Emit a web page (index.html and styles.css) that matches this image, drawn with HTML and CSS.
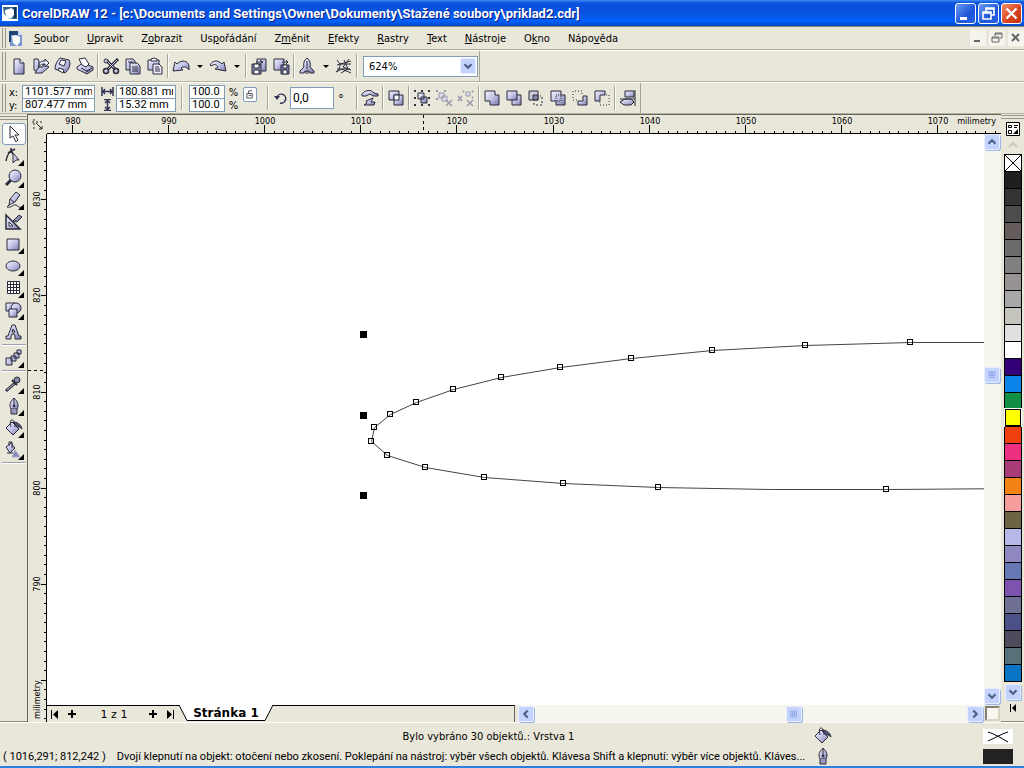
FILE: index.html
```html
<!DOCTYPE html>
<html lang="cs">
<head>
    <meta charset="UTF-8">
    <meta name="viewport" content="width=device-width, initial-scale=1.0">
    <title>CorelDRAW 12</title>
    <link rel="stylesheet" href="styles.css">
</head>
<body>
    <svg class="defs" aria-hidden="true">
        <defs>
            <linearGradient id="lav" x1="0" y1="0" x2="1" y2="1">
                <stop offset="0" stop-color="#f4f4ff"/>
                <stop offset="0.5" stop-color="#c4c4e8"/>
                <stop offset="1" stop-color="#7878aa"/>
            </linearGradient>
            <symbol id="bucket" viewBox="0 0 18 18">
                <path d="M1 9l6-6 7 7-6 6z" fill="url(#lav)"/>
                <path d="M6 8C5 4 5 1 7 1s3 3 3 7" fill="none"/>
                <path d="M8 3c4 0 8 2 9 7-2-2-3-2-5-2z" fill="#555577"/>
            </symbol>
            <symbol id="nib" viewBox="0 0 18 18">
                <path d="M9 1C5 5 4 8 6 12h6c2-4 1-7-3-11z" fill="url(#lav)"/>
                <path d="M9 1v8M6 12v5h6v-5" fill="#9999bb"/>
                <circle cx="9" cy="9" r="1" fill="#333"/>
            </symbol>
            <symbol id="down" viewBox="0 0 16 16"><path d="M4 6l4 4 4-4" fill="none" stroke="#4d6185" stroke-width="2.5"/></symbol>
            <symbol id="up" viewBox="0 0 16 16"><path d="M4 10l4-4 4 4" fill="none" stroke="#4d6185" stroke-width="2.5"/></symbol>
            <symbol id="left" viewBox="0 0 16 16"><path d="M10 4L6 8l4 4" fill="none" stroke="#4d6185" stroke-width="2.5"/></symbol>
            <symbol id="right" viewBox="0 0 16 16"><path d="M6 4l4 4-4 4" fill="none" stroke="#4d6185" stroke-width="2.5"/></symbol>
        </defs>
    </svg>

    <header class="titlebar">
        <svg class="app-icon" viewBox="0 0 16 16">
            <rect width="16" height="16" fill="#fff"/>
            <path d="M1 2h14v12H8L2 9z" fill="#336688"/>
            <path d="M3 5l4-1 2-1 3 2 1 4-2 2-2 3-4-2-2-4z" fill="#fff"/>
            <path d="M12 2h2v11h-2z" fill="#113355"/>
        </svg>
        <h1>CorelDRAW 12 - [c:\Documents and Settings\Owner\Dokumenty\Stažené soubory\priklad2.cdr]</h1>
        <button class="win-btn" aria-label="Minimalizovat"><svg viewBox="0 0 19 19"><path d="M4 13h7v3H4z" fill="#fff"/></svg></button>
        <button class="win-btn" aria-label="Obnovit"><svg viewBox="0 0 19 19"><path d="M7 8V4h8v7h-3M7 5h8M4 8h8v7H4zM4 9h8" fill="none" stroke="#fff" stroke-width="1.6"/></svg></button>
        <button class="win-btn close" aria-label="Zavřít"><svg viewBox="0 0 19 19"><path d="M4.500 4.500l10 10M14.500 4.500l-10 10" stroke="#fff" stroke-width="2.4"/></svg></button>
    </header>

    <nav class="menubar">
        <span class="grip"></span>
        <svg class="doc-icon" viewBox="0 0 14 16">
            <path d="M0 1h9l4 4v11H1z" fill="#7799cc"/>
            <path d="M0 1h9v4H0zM0 5h2v7H0z" fill="#224477"/>
            <path d="M3 6l4-1 4 2v5l-3 4-4-3z" fill="#fff"/>
            <path d="M9 1v4h4z" fill="#ccddff"/>
        </svg>
        <a href="#"><u>S</u>oubor</a>
        <a href="#"><u>U</u>pravit</a>
        <a href="#">Z<u>o</u>brazit</a>
        <a href="#">Us<u>p</u>ořádání</a>
        <a href="#">Z<u>m</u>ěnit</a>
        <a href="#"><u>E</u>fekty</a>
        <a href="#"><u>R</u>astry</a>
        <a href="#"><u>T</u>ext</a>
        <a href="#"><u>N</u>ástroje</a>
        <a href="#">O<u>k</u>no</a>
        <a href="#">Nápo<u>v</u>ěda</a>
        <div class="mdi">
            <button aria-label="Minimalizovat dokument"><svg viewBox="0 0 12 12"><path d="M2 8h6v2H2z" fill="#666"/></svg></button>
            <button aria-label="Obnovit dokument"><svg viewBox="0 0 12 12"><path d="M4 4V1h7v5H9M4 2h7M1 5h7v5H1zM1 6h7" fill="none" stroke="#666"/></svg></button>
            <button aria-label="Zavřít dokument"><svg viewBox="0 0 12 12"><path d="M2 2l7 7M9 2L2 9" stroke="#666" stroke-width="2"/></svg></button>
        </div>
    </nav>

    <div class="bar">
        <div class="toolbar">
            <span class="grip"></span>
            <button class="tool" aria-label="Nový"><svg viewBox="0 0 18 18"><path d="M4 2h6l4 4v11H4z" fill="url(#lav)"/><path d="M10 2v4h4" fill="#fff"/></svg></button>
            <button class="tool" aria-label="Otevřít"><svg viewBox="0 0 18 18"><path d="M2 2h4l1 2v12l-5-3z" fill="url(#lav)"/><path d="M3 16l4-6h4V7l6 3-7 6z" fill="url(#lav)"/><path d="M7 8c1-4 3-4 6-4V2l4 4-4 4V7c-3 0-4 0-6 3z" fill="#eef"/></svg></button>
            <button class="tool" aria-label="Uložit"><svg viewBox="0 0 18 18"><path d="M6 1l9 2c2 4 1 8-4 13L1 12C1 8 3 4 6 1z" fill="url(#lav)"/><path d="M7 3l5 1-2 5-5-2zM5 11l5 2-1 3-5-3z" fill="#fff"/></svg></button>
            <button class="tool" aria-label="Tisk"><svg viewBox="0 0 18 18"><path d="M1 10l6-4 10 4v3l-6 4-10-5z" fill="url(#lav)"/><path d="M6 8L3 2l6-1 4 6-3 3z" fill="#fff"/><path d="M5 11l6 3 5-3M10 15l4-2" fill="none"/></svg></button>
            <span class="sep"></span>
            <button class="tool" aria-label="Vyjmout"><svg viewBox="0 0 18 18"><path d="M5 4l9 9M16 2L5 13" fill="none" stroke-width="3"/><path d="M15 3L6 12M6 5l7 7" stroke="#ccccee"/><circle cx="4" cy="14" r="2.500" fill="#ccd" stroke-width="1.500"/><circle cx="14" cy="14" r="2.500" fill="#ccd" stroke-width="1.500"/><circle cx="4" cy="4" r="2" fill="#ccd"/></svg></button>
            <button class="tool" aria-label="Kopírovat"><svg viewBox="0 0 18 18"><path d="M2 2h7l2 2v9H2z" fill="url(#lav)"/><path d="M6 6h7l3 3v8H6z" fill="url(#lav)"/><path d="M4 5h5M8 10h6M8 12h6M8 14h6" fill="none"/></svg></button>
            <button class="tool" aria-label="Vložit"><svg viewBox="0 0 18 18"><path d="M2 3h11v10H2z" fill="url(#lav)"/><path d="M5 4V2l3-1 3 1v2z" fill="#fff"/><path d="M7 7h6l3 3v7H7z" fill="#eef"/><path d="M9 10h4M9 12h5M9 14h5" fill="none"/></svg></button>
            <span class="sep"></span>
            <button class="tool" aria-label="Zpět"><svg viewBox="0 0 18 18"><path d="M1 14L3 5l2 2c5-5 11-3 12 2v4c-2-3-5-4-8-2l2 2z" fill="url(#lav)"/></svg></button>
            <button class="drop" aria-label="Seznam zpět"></button>
            <button class="tool" aria-label="Znovu"><svg viewBox="0 0 18 18"><path d="M17 14L15 5l-2 2C8 2 3 4 1 8l1 1c3-2 5-2 7 1l-3 2z" fill="url(#lav)"/></svg></button>
            <button class="drop" aria-label="Seznam znovu"></button>
            <span class="sep"></span>
            <button class="tool" aria-label="Import"><svg viewBox="0 0 18 18"><path d="M7 2h9v12H7z" fill="url(#lav)"/><path d="M2 7h9v10H2z" fill="#8888aa"/><path d="M4 7h5v4H4zM4 13h5v4H4z" fill="#fff"/><path d="M6 5h7M10 3l3 2-3 2" fill="none"/></svg></button>
            <button class="tool" aria-label="Export"><svg viewBox="0 0 18 18"><path d="M2 2h10v11H2z" fill="url(#lav)"/><path d="M9 8h8v9H9z" fill="#7777aa"/><path d="M11 8h4v3h-4zM11 13h4v4h-4z" fill="#fff"/><path d="M10 5h6M14 3l2 2-2 2" fill="none"/></svg></button>
            <span class="sep"></span>
            <button class="tool" aria-label="Spouštěč aplikací"><svg viewBox="0 0 18 18"><path d="M9 1c3 2 4 6 3 9l4 4v2h-4l-1-2H7l-1 2H2v-2l4-4C5 7 6 3 9 1z" fill="url(#lav)"/><path d="M9 4v8M8 14v3M10 14v3" fill="none"/></svg></button>
            <button class="drop" aria-label="Seznam aplikací"></button>
            <button class="tool" aria-label="Corel online"><svg viewBox="0 0 18 18"><path d="M2 3l3 4h11M2 8l14-4M5 7c0 5-2 6-4 8l6-3 9 4M9 3l4 9-7 4M14 2l-6 8 8 3M2 12h13" fill="none"/></svg></button>
            <span class="sep"></span>
            <div class="zoom">
                <select aria-label="Úroveň zvětšení"><option>624%</option><option>100%</option><option>200%</option></select>
                <svg class="zoom-arrow"><use href="#down"/></svg>
            </div>
        </div>
    </div>

    <div class="bar">
        <form class="toolbar props">
            <span class="grip"></span>
            <div class="pair">
                <label for="px">x:</label><input id="px" value="1101.577 mm">
                <label for="py">y:</label><input id="py" value="807.477 mm">
            </div>
            <div class="pair size">
                <label for="pw"><svg viewBox="0 0 13 12"><path d="M1 1v9M12 1v9M2 5.500h9M4 3L2 5.500 4 8M9 3l2 2.500L9 8" fill="none" stroke="#335" stroke-width="1.500"/></svg></label><input id="pw" aria-label="Šířka" value="180.881 mm">
                <label for="ph"><svg viewBox="0 0 13 12"><path d="M3 .5h7M3 11.500h7M6.500 1v10M4 4l2.500-2.500L9 4M4 8l2.500 2.500L9 8" fill="none" stroke="#335" stroke-width="1.500"/></svg></label><input id="ph" aria-label="Výška" value="15.32 mm">
            </div>
            <span class="sep wide-sep"></span>
            <div class="pair scale">
                <input id="sx" value="100.0"><label for="sx">%</label>
                <input id="sy" value="100.0"><label for="sy">%</label>
            </div>
            <button type="button" class="lock" aria-label="Zachovat poměr"><svg viewBox="0 0 11 12"><path d="M2 5h6v5H2zM4 5V2h4M4 7h3" fill="none" stroke="#445"/></svg></button>
            <span class="sep wide-sep"></span>
            <label class="angle"><svg viewBox="0 0 14 14"><path d="M3 6a4.500 4.500 0 1 1 3 6" fill="none" stroke="#335" stroke-width="1.500"/><path d="M0 5h6L3 9z" fill="#335"/></svg><input value="0,0" aria-label="Úhel otočení"></label>
            <span class="degree">°</span>
            <span class="sep"></span>
            <button type="button" class="tool" aria-label="Zrcadlit"><svg viewBox="0 0 18 18"><path d="M1 5c3-4 9-5 12-1l4 1v2h-5l-3-2-4 2H1z" fill="url(#lav)"/><path d="M5 12l7-3-2 4h4l-1 3H3l3-2z" fill="url(#lav)"/></svg></button>
            <span class="sep"></span>
            <button type="button" class="tool" aria-label="Kombinovat"><svg viewBox="0 0 18 18"><path d="M2 2h10v9H2z" fill="url(#lav)"/><path d="M7 6h9v10H7z" fill="url(#lav)"/><path d="M7 6h5v5H7z" fill="#fff"/></svg></button>
            <span class="sep"></span>
            <button type="button" class="tool" aria-label="Seskupit"><svg viewBox="0 0 18 18"><path d="M5 4h6v6H5zM8 8h6v6H8z" fill="url(#lav)"/><path d="M1 1h2v2H1zM8 1h2v2H8zM15 1h2v2h-2zM1 8h2v2H1zM1 15h2v2H1zM8 15h2v2H8zM15 8h2v2h-2zM15 15h2v2h-2z" fill="#334" stroke="none"/></svg></button>
            <button type="button" class="tool off" disabled aria-label="Zrušit skupinu"><svg viewBox="0 0 18 18"><path d="M4 4h5v5H4zM7 7h5v5H7z" fill="#dde"/><path d="M1 1h2v2H1zM9 1h2v2H9zM1 9h2v2H1z" fill="#99a" stroke="none"/><path d="M11 11l6 6M17 11l-6 6" stroke-width="1.500"/></svg></button>
            <button type="button" class="tool off" disabled aria-label="Zrušit všechny skupiny"><svg viewBox="0 0 18 18"><path d="M9 3h4v4H9z" fill="#dde"/><path d="M1 7l4 5M5 7l-4 5M10 11l6 6M16 11l-6 6" stroke-width="1.500"/><path d="M6 2h1v1H6zM15 2h1v1h-1zM15 8h1v1h-1z"/></svg></button>
            <span class="sep"></span>
            <button type="button" class="tool" aria-label="Sloučit"><svg viewBox="0 0 18 18"><path d="M2 2h10v4h4v10H7v-4H2z" fill="url(#lav)"/></svg></button>
            <button type="button" class="tool" aria-label="Oříznout"><svg viewBox="0 0 18 18"><path d="M7 6h9v10H7z" fill="url(#lav)"/><path d="M2 2h10v9H2z" fill="url(#lav)"/></svg></button>
            <button type="button" class="tool" aria-label="Průnik"><svg viewBox="0 0 18 18"><path d="M2 2h9v9H2z" fill="#ccd"/><path d="M6 6h5v5H6z" fill="#8888aa"/><path d="M7 14v2h8V7h-2" fill="none" stroke-dasharray="2 2"/></svg></button>
            <button type="button" class="tool" aria-label="Zjednodušit"><svg viewBox="0 0 18 18"><path d="M2 2h10v4h4v10H7v-4H2z" fill="url(#lav)"/><path d="M7 12V6h5v6z" fill="none" stroke-dasharray="1 1"/></svg></button>
            <button type="button" class="tool" aria-label="Přední minus zadní"><svg viewBox="0 0 18 18"><path d="M7 12h5V7h4v9H7z" fill="url(#lav)"/><path d="M6 11H2V2h9v4" fill="none" stroke-dasharray="1 2"/></svg></button>
            <button type="button" class="tool" aria-label="Zadní minus přední"><svg viewBox="0 0 18 18"><path d="M2 2h10v4H7v6H2z" fill="url(#lav)"/><path d="M13 6h3v10H7v-3" fill="none" stroke-dasharray="1 2"/></svg></button>
            <span class="sep"></span>
            <button type="button" class="tool" aria-label="Zarovnat"><svg viewBox="0 0 18 18"><path d="M6 2h9v6H6z" fill="url(#lav)"/><path d="M1 13l5-3h6l3 3-3 3H5z" fill="url(#lav)"/><path d="M16 1v16M1 10h15" fill="none"/></svg></button>
        </form>
    </div>

    <main class="workspace">
        <aside class="toolbox">
            <span class="top-grip"></span>
            <button class="tool active" aria-label="Výběr"><svg viewBox="0 0 18 18"><path d="M5 1l9 9h-4l3 5-2 2-3-6-3 2z" fill="#fff"/></svg></button>
            <button class="tool fly" aria-label="Tvar"><svg viewBox="0 0 18 18"><path d="M1 14C2 9 3 6 6 4M3 6l7-4M6 1v5M6 4l3 4" fill="none" stroke-width="1.500"/><path d="M8 6l6 7h-3l-3 3z" fill="url(#lav)"/></svg></button>
            <button class="tool fly" aria-label="Lupa"><svg viewBox="0 0 18 18"><path d="M6 11l-5 5" stroke-width="3"/><circle cx="10" cy="7" r="6" fill="url(#lav)"/></svg></button>
            <button class="tool fly" aria-label="Od ruky"><svg viewBox="0 0 18 18"><path d="M11 1l4 3-5 7-6 3 1-6z" fill="url(#lav)"/><path d="M5 8l4 3M4 14l-2 2c5 1 6-3 9-2s2 3 5 2" fill="none"/></svg></button>
            <button class="tool" aria-label="Inteligentní kreslení"><svg viewBox="0 0 18 18"><path d="M1 2v14h14z" fill="url(#lav)" stroke-width="1.500"/><path d="M4 9v4h4z" fill="#fff"/><path d="M8 8l6-6 3 2-5 5z" fill="#8888aa"/></svg></button>
            <button class="tool fly" aria-label="Obdélník"><svg viewBox="0 0 18 18"><path d="M2 4h12v11H2z" fill="url(#lav)"/></svg></button>
            <button class="tool fly" aria-label="Elipsa"><svg viewBox="0 0 18 18"><ellipse cx="8" cy="9" rx="7" ry="5" fill="url(#lav)"/></svg></button>
            <button class="tool fly" aria-label="Mřížka"><svg viewBox="0 0 18 18"><path d="M2.500 2.500h12v12h-12z" fill="#fff"/><path d="M2 5.500h13M2 8.500h13M2 11.500h13M5.500 2v13M8.500 2v13M11.500 2v13"/></svg></button>
            <button class="tool fly" aria-label="Základní tvary"><svg viewBox="0 0 18 18"><path d="M1 2h9v8H1z" fill="url(#lav)"/><circle cx="11" cy="7" r="5" fill="url(#lav)"/><path d="M4 8h8v8H4z" fill="url(#lav)"/></svg></button>
            <button class="tool" aria-label="Text"><svg viewBox="0 0 18 18"><path d="M7 2h3l4 11h2v3h-6v-3l-1-2H7l-1 2v3H1v-3h2zM8 6L7 9h3z" fill="url(#lav)"/></svg></button>
            <span class="hsep"></span>
            <button class="tool fly" aria-label="Přechod"><svg viewBox="0 0 18 18"><path d="M12 1h4v4h-4zM9 4h5v5H9zM6 7h5v5H6zM1 9h6v7H1z" fill="url(#lav)"/></svg></button>
            <span class="hsep"></span>
            <button class="tool fly" aria-label="Kapátko"><svg viewBox="0 0 18 18"><path d="M10 8l-9 8" stroke-width="3"/><path d="M10 8l-8 7" stroke="#ccd"/><circle cx="12" cy="5" r="3" fill="#8888aa"/><path d="M7 5l5 5" stroke-width="2"/></svg></button>
            <button class="tool fly" aria-label="Obrys"><svg viewBox="0 0 18 18"><use href="#nib"/></svg></button>
            <button class="tool fly" aria-label="Výplň"><svg viewBox="0 0 18 18"><use href="#bucket"/></svg></button>
            <button class="tool fly" aria-label="Interaktivní výplň"><svg viewBox="0 0 18 18"><path d="M1 6l5-4 4 5-5 5z" fill="url(#lav)"/><path d="M4 5V1h3v6M2 12h6" fill="none"/><path d="M10 9l5 7H7z" fill="#8888bb" stroke="#aaaacc"/></svg></button>
            <span class="hsep"></span>
        </aside>

        <section class="document">
            <div class="corner"><svg viewBox="0 0 12 12"><path d="M2 0v12M0 3h12" fill="none" stroke="#222" stroke-dasharray="2 2"/><path d="M4 4l6 6M10 7v3H7" fill="none" stroke="#222"/></svg></div>
            <svg class="ruler-h" id="rulerH"></svg>
            <svg class="ruler-v" id="rulerV"></svg>
            <svg class="canvas" id="canvas"></svg>
            <div class="vscroll">
                <button class="scroll-btn" aria-label="Nahoru"><svg><use href="#up"/></svg></button>
                <span class="thumb"><svg viewBox="0 0 16 16"><path d="M4 4.500h8M4 6.500h8M4 8.500h8M4 10.500h8" stroke="#7f9be0"/></svg></span>
                <button class="scroll-btn" aria-label="Dolů"><svg><use href="#down"/></svg></button>
            </div>
            <div class="pagebar">
                <div class="pages">
                    <button aria-label="První stránka"><svg viewBox="0 0 12 12"><path d="M2 2h1v9H2zM9 2v9L4 6.500z"/></svg></button>
                    <button aria-label="Přidat stránku před"><svg viewBox="0 0 12 12"><path d="M5 2h2v3h3v2H7v3H5V7H2V5h3z"/></svg></button>
                    <span class="count">1 z 1</span>
                    <button aria-label="Přidat stránku za"><svg viewBox="0 0 12 12"><path d="M5 2h2v3h3v2H7v3H5V7H2V5h3z"/></svg></button>
                    <button aria-label="Poslední stránka"><svg viewBox="0 0 12 12"><path d="M9 2h1v9H9zM3 2v9l5-4.500z"/></svg></button>
                    <button class="page-tab">
                        <svg viewBox="0 0 94 17"><path d="M0 0l8 15.500h78L94 0z" fill="#fff"/><path d="M0 0l8 15.500h78L94 0" fill="none" stroke="#000"/></svg>
                        <span>Stránka 1</span>
                    </button>
                </div>
                <div class="hscroll">
                    <button class="scroll-btn" aria-label="Vlevo"><svg><use href="#left"/></svg></button>
                    <span class="thumb"><svg viewBox="0 0 16 16"><path d="M4.500 4v8M6.500 4v8M8.500 4v8M10.500 4v8" stroke="#7f9be0"/></svg></span>
                    <button class="scroll-btn" aria-label="Vpravo"><svg><use href="#right"/></svg></button>
                </div>
            </div>
            <button class="navigator" aria-label="Navigátor"></button>
        </section>

        <aside class="palette">
            <span class="top-grip"></span>
            <button class="pal-menu" aria-label="Nabídka palety"><svg viewBox="0 0 14 14"><path d="M.5.5h13v13H.5z" fill="#fff" stroke="#000"/><path d="M2.500 3.500h3v2h-3zM2.500 8.500h3v3h-3zM8 3.500h4M8 5.500h3" fill="none" stroke="#000"/><path d="M12 7v5H7z"/></svg></button>
            <button class="pal-up" disabled aria-label="Předchozí barvy"><svg viewBox="0 0 16 16"><path d="M4 10l4-4 4 4" fill="none" stroke="#c9c7ba" stroke-width="2"/></svg></button>
            <div class="swatches" id="swatches"></div>
            <button class="scroll-btn" aria-label="Další barvy"><svg><use href="#down"/></svg></button>
            <button class="pal-expand" aria-label="Rozbalit paletu"><svg viewBox="0 0 12 12"><path d="M3 2h1v8H3zM9 2v8L5 6z"/></svg></button>
        </aside>
    </main>

    <footer class="status">
        <p class="selection">Bylo vybráno 30 objektů.: Vrstva 1</p>
        <svg class="status-icon" viewBox="0 0 18 18"><use href="#bucket"/></svg>
        <svg class="fill-box" viewBox="0 0 30 15"><path d="M0 0h30v15H0z" fill="#fff"/><path d="M5 3c7 2 13 6 20 10M25 3C18 5 12 9 5 12" fill="none" stroke="#000"/></svg>
        <p class="hint"><span>( 1016,291; 812,242 )</span><span>Dvojí klepnutí na objekt: otočení nebo zkosení. Poklepání na nástroj: výběr všech objektů. Klávesa Shift a klepnutí: výběr více objektů. Kláves...</span></p>
        <svg class="status-icon" viewBox="0 0 18 18"><use href="#nib"/></svg>
        <span class="outline-box"></span>
    </footer>
    <script src="script.js"></script>
</body>
</html>
```

FILE: styles.css
```css
* {
    box-sizing: border-box;
}

body {
    margin: 0;
    height: 100vh;
    display: flex;
    flex-direction: column;
    overflow: hidden;
    background-color: #e9e7da;
    color: #000;
    font-family: "DejaVu Sans Condensed", "DejaVu Sans", Tahoma, sans-serif;
    font-size: 11px;
    border-bottom: 2px solid #2a7fe0;
}

button, input, select {
    font: inherit;
    color: inherit;
    margin: 0;
    padding: 0;
    border: none;
    background: none;
}

button svg {
    display: block;
}

.defs {
    position: absolute;
    width: 0;
    height: 0;
}

/* title bar */
.titlebar {
    height: 26px;
    display: flex;
    align-items: center;
    gap: 2px;
    padding: 0 2px;
    background: linear-gradient(#3a8cf5 0, #0a50dd 3px, #0553dd 50%, #0262fb 80%, #0046c8 100%);
}

.app-icon {
    width: 16px;
    height: 16px;
}

.titlebar h1 {
    flex: 1;
    margin: 0;
    padding-left: 2px;
    color: #fff;
    font-family: Roboto, "Trebuchet MS", sans-serif;
    font-size: 13px;
    font-weight: bold;
    white-space: nowrap;
    text-shadow: 1px 1px #0a1883;
}

.win-btn {
    width: 21px;
    height: 21px;
    border: 1px solid #fff;
    border-radius: 3px;
    background: linear-gradient(135deg, #6b9cf5, #1c55d8 60%, #2a62e6);
}

.win-btn.close {
    background: linear-gradient(135deg, #f0906a, #d8401c 60%, #c03010);
}

/* menu */
.menubar {
    height: 24px;
    display: flex;
    align-items: center;
    border-top: 1px solid #8a8878;
    border-bottom: 1px solid #a8a693;
}

.menubar a {
    padding-top: 1px;
    color: #000;
    text-decoration: none;
    margin-right: 18px;
}

.doc-icon {
    width: 14px;
    height: 16px;
    margin: 0 11px 0 1px;
}

.mdi {
    display: flex;
    gap: 3px;
    margin-left: auto;
}

.mdi button {
    width: 16px;
    height: 16px;
    padding: 2px;
    background-color: #f4f3ec;
}

.grip {
    width: 4px;
    align-self: stretch;
    margin: 1px 2px;
    border-left: 1px solid #98968a;
    border-right: 1px solid #98968a;
}

/* toolbars */
.bar {
    height: 32px;
    display: flex;
    border-top: 1px solid #fff;
    border-bottom: 1px solid #b4b2a0;
}

.toolbar {
    display: flex;
    align-items: center;
    padding-right: 1px;
    border-right: 1px solid #a8a693;
}

.tool {
    position: relative;
    width: 22px;
    height: 22px;
    padding: 2px;
    flex: none;
}

.tool svg, .status-icon {
    width: 18px;
    height: 18px;
    stroke: #2a2a3a;
    stroke-width: 1;
}

.tool.off svg {
    stroke: #9999aa;
}

.sep {
    width: 2px;
    height: 24px;
    margin: 0 1px;
    border-left: 1px solid #a8a693;
    border-right: 1px solid #fff;
}

.sep.wide-sep {
    margin: 0 5px;
}

.drop {
    width: 15px;
    height: 22px;
    display: flex;
    align-items: center;
    justify-content: center;
}

.drop::after {
    content: "";
    border: 3px solid transparent;
    border-top-color: #000;
    border-bottom: none;
}

.zoom {
    position: relative;
    margin-left: 4px;
}

.zoom select {
    appearance: none;
    width: 115px;
    height: 21px;
    padding-left: 5px;
    border: 1px solid #7f9db9;
    background-color: #fff;
}

.zoom-arrow, .scroll-btn, .thumb {
    width: 16px;
    height: 16px;
    background-color: #c3d3fd;
    border: 1px solid #e8eeff;
    border-radius: 2px;
}

.zoom-arrow {
    position: absolute;
    top: 2px;
    right: 2px;
    pointer-events: none;
}

.scroll-btn, .thumb {
    box-shadow: 1px 1px #9db8e8;
}

.scroll-btn svg, .thumb svg {
    display: block;
    width: 14px;
    height: 14px;
}

/* property bar */
.props input {
    height: 14px;
    padding: 0 2px;
    border: 1px solid #7f9db9;
    background-color: #fff;
    font-family: Roboto, Tahoma, sans-serif;
}

.pair {
    display: grid;
    grid-template-columns: 13px 73px;
    align-items: center;
    padding: 1px 0 0 1px;
}

.pair.size {
    grid-template-columns: 15px 60px;
    padding-left: 6px;
}

.pair.scale {
    grid-template-columns: 36px 17px;
}

.pair input {
    width: 100%;
    margin-top: -1px;
}

.pair.scale label {
    text-align: center;
}

.pair svg {
    display: block;
    width: 13px;
    height: 12px;
}

.lock {
    width: 14px;
    height: 15px;
    padding: 1px;
    margin: 0 5px 8px 1px;
    border: 1px solid #7f9db9;
    border-radius: 2px;
    background-color: #fff;
}

.angle {
    display: flex;
    align-items: center;
    gap: 2px;
}

.angle svg {
    width: 14px;
    height: 14px;
}

.props .angle input {
    width: 44px;
    height: 22px;
    font-size: 12px;
}

.degree {
    width: 21px;
    padding-left: 4px;
    font-size: 13px;
}

/* workspace */
.workspace {
    flex: 1;
    min-height: 0;
    display: grid;
    grid-template-columns: 27px 1fr 23px;
    border-bottom: 1px solid #fff;
}

.toolbox, .palette {
    display: flex;
    flex-direction: column;
    align-items: center;
    border-bottom: 1px solid #8a8878;
}

.toolbox .tool {
    width: 24px;
    padding: 2px 3px;
}

.toolbox .tool.active {
    border: 1px solid #7f9db9;
    border-radius: 3px;
    background-color: #fff;
    padding: 1px 2px;
}

.tool.fly::after {
    content: "";
    position: absolute;
    right: 2px;
    bottom: 1px;
    border: 3px solid #000;
    border-top-color: transparent;
    border-left-color: transparent;
}

.top-grip {
    width: 100%;
    height: 4px;
    margin: 2px 0 3px;
    flex: none;
    border-top: 1px solid #98968a;
    border-bottom: 1px solid #98968a;
}

.palette .top-grip {
    margin: 1px 0 3px;
}

.hsep {
    width: 24px;
    height: 2px;
    margin: 1px 0;
    border-top: 1px solid #a09eae;
    border-bottom: 1px solid #fff;
}

.document {
    display: grid;
    grid-template-columns: 19px 1fr 17px;
    grid-template-rows: 19px 1fr 17px;
    min-width: 0;
    border-top: 1px solid #66655a;
    border-left: 1px solid #66655a;
}

.corner {
    padding: 4px 0 0 4px;
}

.corner svg {
    display: block;
    width: 12px;
    height: 12px;
}

.ruler-h {
    grid-column: 2 / 4;
    width: 100%;
    height: 19px;
    border-bottom: 1px solid #000;
}

.ruler-v {
    grid-row: 2 / 4;
    width: 19px;
    height: 100%;
    border-right: 1px solid #000;
}

.ruler-h, .ruler-v {
    display: block;
    shape-rendering: crispEdges;
    font-size: 9px;
}

.canvas {
    display: block;
    width: 100%;
    height: 100%;
    background-color: #fff;
}

.vscroll, .hscroll {
    display: flex;
    justify-content: space-between;
    background-color: #f6f5ee;
}

.vscroll {
    flex-direction: column;
    padding-bottom: 1px;
}

.vscroll .thumb {
    margin-bottom: 88px;
}

.pagebar {
    display: flex;
    min-width: 0;
}

.pages {
    flex: 1;
    display: flex;
    align-items: center;
    padding-left: 2px;
    border-top: 1px solid #000;
    border-right: 1px solid #66655a;
}

.pages button {
    width: 17px;
    height: 14px;
}

.pages button svg {
    width: 12px;
    height: 12px;
}

.count {
    width: 62px;
    text-align: center;
    font-family: "DejaVu Sans", Verdana, sans-serif;
}

.pages .count + button {
    margin-left: 2px;
}

.pages .page-tab {
    position: relative;
    width: 94px;
    height: 17px;
    margin: -1px 0 0 -2px;
}

.pages .page-tab svg {
    position: absolute;
    top: 0;
    left: 0;
    width: 94px;
    height: 17px;
}

.page-tab span {
    position: relative;
    font-family: "DejaVu Sans", Verdana, sans-serif;
    font-size: 12px;
    font-weight: bold;
    line-height: 15px;
}

.hscroll {
    flex: 1;
    align-items: center;
    margin-left: 3px;
    padding-right: 1px;
}

.hscroll .thumb {
    margin-left: 86px;
}

.navigator {
    margin: 1px;
    border: 2px inset #d8d5c4;
    background-color: #f8f7f0;
}

/* colour palette */
.pal-menu, .pal-menu svg {
    width: 14px;
    height: 14px;
}

.pal-up {
    width: 16px;
    height: 16px;
    margin: 1px 0;
}

.swatches {
    width: 18px;
    border: 1px solid #000;
    border-top: none;
    display: flex;
    flex-direction: column;
}

.swatch {
    height: 17px;
    border-top: 1px solid #000;
}

.swatch.current {
    border: 1px solid #000;
    outline: 1px solid #fff;
}

.palette .scroll-btn {
    margin-top: 2px;
}

.pal-expand {
    margin-top: 2px;
}

.pal-expand svg {
    width: 12px;
    height: 12px;
}

/* status bar */
.status {
    display: grid;
    grid-template-columns: 1fr 18px 181px;
    align-items: center;
    row-gap: 2px;
    padding: 4px 11px 1px 3px;
}

.status p {
    margin: 0;
    white-space: nowrap;
}

.selection {
    padding-left: 160px;
    text-align: center;
}

.hint {
    display: flex;
    gap: 11px;
    min-width: 0;
    font-family: Roboto, Tahoma, sans-serif;
}

.fill-box, .outline-box {
    width: 30px;
    height: 15px;
    justify-self: end;
}

.outline-box {
    background-color: #222;
}
```

FILE: script.js
```js
const NS = 'http://www.w3.org/2000/svg';

function add(parent, tag, attrs, text) {
    const el = document.createElementNS(NS, tag);
    for (const key in attrs) el.setAttribute(key, attrs[key]);
    if (text) el.textContent = text;
    parent.appendChild(el);
    return el;
}

const STEP = 96.1; // pixels per 10 mm

function drawHorizontalRuler() {
    const svg = document.getElementById('rulerH');
    const width = svg.clientWidth;
    for (let i = -2; 25 + i * STEP / 10 < width - 3; i++) {
        const x = Math.round(25 + i * STEP / 10);
        const major = i % 10 === 0;
        add(svg, 'rect', { x: x, y: major ? 10 : 16, width: 1, height: major ? 8 : 2 });
        if (major && x < width - 50) {
            add(svg, 'text', { x: x + 1, y: 9, 'text-anchor': 'middle' }, String(980 + i));
        }
    }
    add(svg, 'text', { x: width - 5, y: 9, 'text-anchor': 'end' }, 'milimetry');
    add(svg, 'path', { d: 'M376.5 0v18', stroke: '#000', 'stroke-dasharray': '3 3' });
}

function drawVerticalRuler() {
    const svg = document.getElementById('rulerV');
    const height = svg.clientHeight;
    for (let i = -6; 65.3 + i * STEP / 10 < height; i++) {
        const y = Math.round(65.3 + i * STEP / 10);
        const major = i % 10 === 0;
        add(svg, 'rect', { x: major ? 13 : 16, y: y, width: major ? 5 : 2, height: 1 });
        if (major && y < height - 60) {
            add(svg, 'text', { transform: `translate(12 ${y}) rotate(-90)`, 'text-anchor': 'middle' }, String(830 - i));
        }
    }
    add(svg, 'text', { transform: `translate(12 ${height - 3}) rotate(-90)` }, 'milimetry');
    add(svg, 'path', { d: 'M0 236.5h18', stroke: '#000', 'stroke-dasharray': '3 3' });
}

function drawCurve() {
    const svg = document.getElementById('canvas');
    const nodes = [
        [863, 208], [758, 211], [665, 216], [584, 224], [513, 233], [454, 243],
        [406, 255], [369, 268], [343, 280], [327, 293], [324, 307], [340, 321],
        [378, 333], [437, 343], [516, 349], [611, 353], [839, 355]
    ];
    const line = [[980, 208], ...nodes.slice(0, 16), [723, 355], nodes[16], [980, 354]];
    add(svg, 'polyline', {
        points: line.map(([x, y]) => `${x + 0.5},${y + 0.5}`).join(' '),
        fill: 'none', stroke: '#444'
    });
    for (const [x, y] of nodes) {
        add(svg, 'rect', { x: x - 2.5, y: y - 2.5, width: 5, height: 5, fill: 'none', stroke: '#000' });
    }
    for (const y of [200, 281, 361]) {
        add(svg, 'rect', { x: 313, y: y - 3, width: 7, height: 7 });
    }
}

function drawSwatches() {
    const box = document.getElementById('swatches');
    const colors = [
        '#ffffff', '#1f1f1f', '#333333', '#4d4d4d', '#665c5c', '#6b6b6b', '#808080', '#999292',
        '#a8a8a8', '#c4c4bc', '#e0e0e0', '#ffffff', '#330077', '#0a84e8', '#119045', '#ffff00',
        '#ee4010', '#ee3080', '#a83c78', '#f58214', '#f59c9c', '#6c6444', '#b8b8e8', '#9088c0',
        '#6678b4', '#7c54b0', '#707094', '#4c5088', '#4c4c5c', '#587078', '#0a74c4'
    ];
    colors.forEach((color, i) => {
        const button = document.createElement('button');
        button.className = i === 15 ? 'swatch current' : 'swatch';
        button.style.backgroundColor = color;
        button.setAttribute('aria-label', i ? color : 'Bez výplně');
        if (i === 0) {
            const svg = add(button, 'svg', { viewBox: '0 0 16 16' });
            add(svg, 'path', { d: 'M0 0l16 16M16 0L0 16', stroke: '#000' });
        }
        box.appendChild(button);
    });
}

drawHorizontalRuler();
drawVerticalRuler();
drawCurve();
drawSwatches();
```
